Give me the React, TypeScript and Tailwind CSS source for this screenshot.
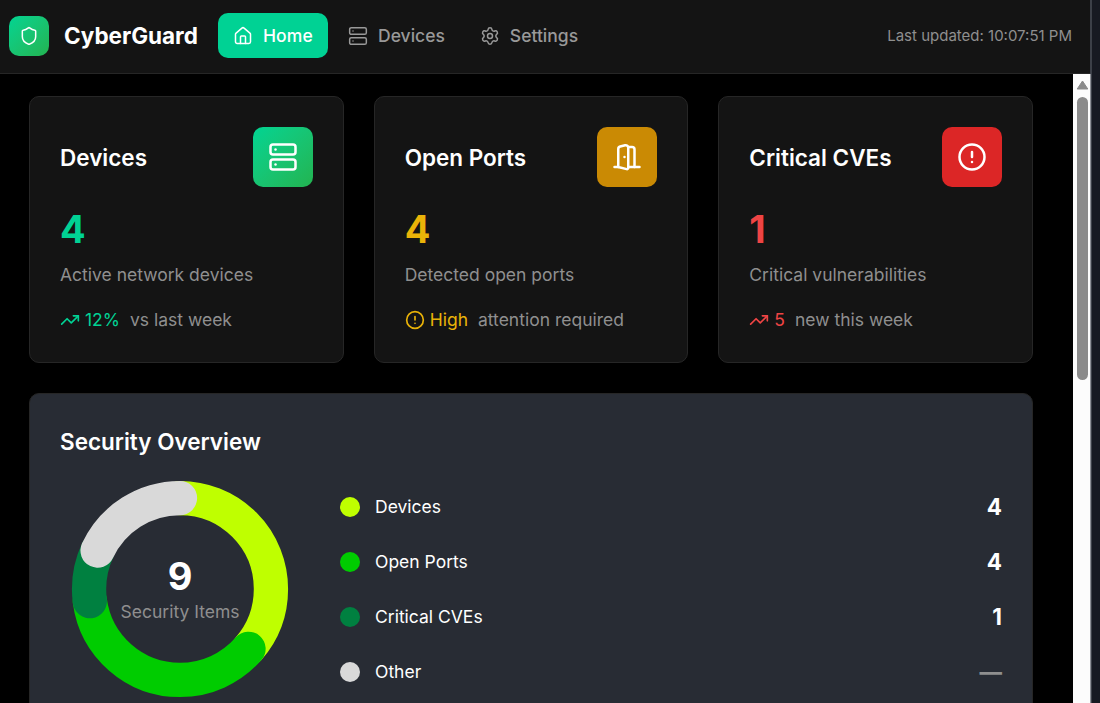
import React from "react";
import { CircleAlert, DoorOpen, House, Server, Settings, Shield, TrendingUp, type LucideIcon } from "lucide-react";

type Stat = {
  title: string;
  value: string;
  caption: string;
  trend: string;
  note: string;
  icon: LucideIcon;
  trendIcon: LucideIcon;
  tile: string;
  text: string;
};

const stats: Stat[] = [
  { title: "Devices", value: "4", caption: "Active network devices", trend: "12%", note: "vs last week", icon: Server, trendIcon: TrendingUp, tile: "bg-linear-135 from-[#00d492] to-[#22b450]", text: "text-[#00d294]" },
  { title: "Open Ports", value: "4", caption: "Detected open ports", trend: "High", note: "attention required", icon: DoorOpen, trendIcon: CircleAlert, tile: "bg-[#ca8a04] -scale-x-100", text: "text-[#eab308]" },
  { title: "Critical CVEs", value: "1", caption: "Critical vulnerabilities", trend: "5", note: "new this week", icon: CircleAlert, trendIcon: TrendingUp, tile: "bg-[#dc2626]", text: "text-[#ef4444]" },
];

const segments = [
  { label: "Devices", share: 4, shown: "4", dot: "bg-[#bfff00]", stroke: "#bfff00" },
  { label: "Open Ports", share: 4, shown: "4", dot: "bg-[#00cc00]", stroke: "#00cc00" },
  { label: "Critical CVEs", share: 1, shown: "1", dot: "bg-[#008040]", stroke: "#008040" },
  { label: "Other", share: 2, shown: "—", dot: "bg-[#d9d9d9]", stroke: "#d9d9d9" },
];

function NavItem({ icon: Icon, label, active }: { icon: LucideIcon; label: string; active?: boolean }) {
  return (
    <button className={`flex h-[45px] items-center gap-2.5 rounded-[10px] px-[15px] text-[17.5px] leading-[25px] font-medium ${active ? "w-[110px] bg-[#00d294] tracking-[0.005em] text-white" : "text-[#999999]"}`}>
      <Icon size={20} strokeWidth={1.8} />
      <span>{label}</span>
    </button>
  );
}

function StatCard({ stat }: { stat: Stat }) {
  const { icon: Icon, trendIcon: TrendIcon } = stat;
  return (
    <section className="h-[267px] rounded-[10px] border border-[#262626] bg-[#141414] p-[30px]">
      <div className="flex items-center justify-between">
        <h2 className="text-[22.5px] leading-[35px] font-semibold text-white">{stat.title}</h2>
        <div className={`flex size-[60px] items-center justify-center rounded-[10px] text-white ${stat.tile}`}>
          <Icon size={30} />
        </div>
      </div>
      <p className={`mt-5 text-[38px] leading-[45px] font-bold ${stat.text}`}>{stat.value}</p>
      <p className="mt-2.5 text-[17.5px] leading-[25px] text-[#8f8f8f]">{stat.caption}</p>
      <div className="mt-5 flex items-center text-[17.5px] leading-[25px]">
        <span className={`flex items-center gap-[5px] ${stat.text}`}>
          <TrendIcon size={20} />
          {stat.trend}
        </span>
        <span className="ml-2.5 text-[#8f8f8f]">{stat.note}</span>
      </div>
    </section>
  );
}

function Donut() {
  const total = segments.reduce((sum, s) => sum + s.share, 0);
  let start = 0;
  return (
    <div className="relative size-[240px] shrink-0">
      <svg viewBox="0 0 42 42" className="size-full -rotate-90">
        {segments.map((s) => {
          const length = (s.share / total) * 100;
          const offset = -start;
          start += length;
          return (
            <circle key={s.label} cx="21" cy="21" r="15.915" fill="none" stroke={s.stroke} strokeWidth="6" strokeLinecap="round" strokeDasharray={`${length} ${100 - length}`} strokeDashoffset={offset} />
          );
        })}
      </svg>
      <div className="absolute inset-0 flex flex-col items-center justify-center">
        <span className="text-[38px] leading-[45px] font-bold text-white">9</span>
        <span className="text-[17.5px] leading-[25px] text-[#8f8f8f]">Security Items</span>
      </div>
    </div>
  );
}

export default function App() {
  return (
    <div className="flex h-[703px] w-[1100px] overflow-hidden bg-[#171a22] font-['Inter',sans-serif]">
      <div className="flex w-[1090px] shrink-0 flex-col bg-black">
        <header className="flex h-[74px] shrink-0 items-center border-b border-[#262626] bg-[#141414] pr-[18px] pb-[2px] pl-[9px]">
          <div className="flex size-10 items-center justify-center rounded-[10px] bg-linear-135 from-[#00d492] to-[#22b450] text-white">
            <Shield size={20} strokeWidth={1.8} />
          </div>
          <h1 className="ml-[15px] w-[154px] text-[22.5px] font-bold text-white">CyberGuard</h1>
          <nav className="flex gap-[5px]">
            <NavItem icon={House} label="Home" active />
            <NavItem icon={Server} label="Devices" />
            <NavItem icon={Settings} label="Settings" />
          </nav>
          <span className="ml-auto text-[15px] leading-5 text-[#8f8f8f]">Last updated: 10:07:51 PM</span>
        </header>
        <div className="flex min-h-0 flex-1">
          <main className="flex-1 overflow-hidden pt-[22px] pr-10 pl-[29px]">
            <div className="grid grid-cols-3 gap-[30px]">
              {stats.map((stat) => (
                <StatCard key={stat.title} stat={stat} />
              ))}
            </div>
            <section className="mt-[30px] rounded-[10px] border border-[#262626] bg-[#282c34] p-[30px]">
              <h2 className="text-[22.5px] leading-[35px] font-semibold text-white">Security Overview</h2>
              <div className="mt-2.5 flex items-center gap-10">
                <Donut />
                <ul className="flex flex-1 flex-col gap-5">
                  {segments.map((s) => (
                    <li key={s.label} className="flex h-[35px] items-center">
                      <span className={`size-5 rounded-full ${s.dot}`} />
                      <span className="ml-[15px] text-[17.5px] leading-[25px] text-white">{s.label}</span>
                      <span className={`ml-auto text-[22.5px] font-bold ${s.shown === "—" ? "text-[#8f8f8f]" : "text-white"}`}>{s.shown}</span>
                    </li>
                  ))}
                </ul>
              </div>
            </section>
          </main>
          <div className="flex w-[17px] shrink-0 flex-col items-center bg-[#fcfcfc] pt-[5px]">
            <svg viewBox="0 0 13 12" className="ml-[2px] h-3 w-[13px]">
              <path d="M6.5 2 11.8 10H1.2Z" fill="#8b8b8b" stroke="#8b8b8b" strokeLinejoin="round" />
            </svg>
            <div className="mt-[6px] ml-[2px] h-[283px] w-[11px] rounded-full bg-[#8b8b8b]" />
          </div>
        </div>
      </div>
      <div className="flex w-px flex-col bg-[#8d9096]">
        <div className="h-[74px] bg-[#3c4048]" />
      </div>
      <div className="w-px bg-[#3c4048]" />
    </div>
  );
}
